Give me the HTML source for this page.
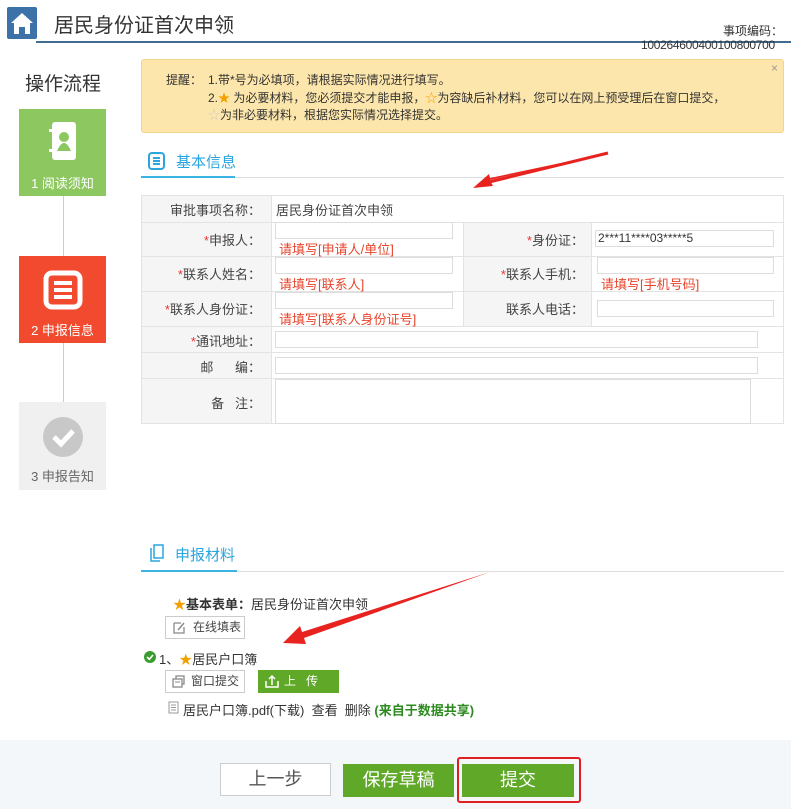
<!DOCTYPE html>
<html><head><meta charset="utf-8"><style>
*{margin:0;padding:0;box-sizing:border-box}
body{width:791px;height:809px;overflow:hidden;background:#fff;font-family:"Liberation Sans","Noto Sans CJK SC",sans-serif;color:#333;font-size:12px;position:relative}
.a{position:absolute}
.lbl{text-align:right;padding-right:8px;background:#f5f5f5;color:#333;font-size:13px}
.r{color:#e33}
.inp{position:absolute;border:1px solid #ddd;background:#fff;height:17px}
.hint{position:absolute;color:#e8452c;font-size:13px}
.btn{position:absolute;border:1px solid #ccc;background:#fff;font-size:12px;color:#444;line-height:21px}
.t{color:#444}
</style></head><body>
<div class="a" style="left:7px;top:7px;width:30px;height:32px;background:#3d72a8;border-radius:2px">
<svg width="30" height="32" viewBox="0 0 30 32"><path d="M15 6 L4 16 H7 V27 H12 V20 H18 V27 H23 V16 H26 Z" fill="#fff"/></svg></div>
<div class="a" style="left:54px;top:9px;font-size:20px;color:#333">居民身份证首次申领</div>
<div class="a" style="left:36px;top:41px;width:755px;height:2px;background:#416d92"></div>
<div class="a" style="right:8px;top:22px;font-size:12px">事项编码：</div>
<div class="a" style="left:641px;top:38px;font-size:12px;letter-spacing:-0.3px">100264600400100800700</div>
<div class="a" style="left:25px;top:69px;font-size:19px;color:#333">操作流程</div>
<div class="a" style="left:19px;top:109px;width:87px;height:87px;background:#8cc760;color:#fff;text-align:center;font-size:13px">
<svg class="a" style="left:29px;top:12px" width="30" height="40" viewBox="0 0 30 40"><rect x="4" y="1" width="24" height="38" rx="3" fill="#fff"/><rect x="1" y="8" width="6" height="3" fill="#fff"/><rect x="1" y="28" width="6" height="3" fill="#fff"/><circle cx="16" cy="16" r="5" fill="#8cc760"/><path d="M9 30 Q16 14 23 30 Z" fill="#8cc760"/></svg>
<div class="a" style="left:0;width:87px;top:64px">1 阅读须知</div></div>
<div class="a" style="left:63px;top:196px;width:1px;height:60px;background:#ccc"></div>
<div class="a" style="left:19px;top:256px;width:87px;height:87px;background:#f24a2f;color:#fff;text-align:center;font-size:13px">
<svg class="a" style="left:24px;top:14px" width="40" height="40" viewBox="0 0 40 40"><rect x="3" y="3" width="34" height="34" rx="6" fill="none" stroke="#fff" stroke-width="5"/><rect x="11" y="11" width="18" height="4" fill="#fff"/><rect x="11" y="18" width="18" height="4" fill="#fff"/><rect x="11" y="25" width="18" height="4" fill="#fff"/></svg>
<div class="a" style="left:0;width:87px;top:64px">2 申报信息</div></div>
<div class="a" style="left:63px;top:343px;width:1px;height:59px;background:#ccc"></div>
<div class="a" style="left:19px;top:402px;width:87px;height:88px;background:#f0f0f0;color:#666;text-align:center;font-size:13px">
<svg class="a" style="left:24px;top:15px" width="40" height="40" viewBox="0 0 40 40"><circle cx="20" cy="20" r="20" fill="#c8c8c8"/><path d="M11 20 L18 27 L30 14" fill="none" stroke="#fff" stroke-width="5"/></svg>
<div class="a" style="left:0;width:87px;top:64px">3 申报告知</div></div>

<div class="a" style="left:141px;top:59px;width:643px;height:74px;background:#fde6ab;border:1px solid #f3d48d;border-radius:3px;font-size:12px;color:#333;line-height:17.5px">
<div class="a" style="right:5px;top:0;color:#999">×</div>
<div class="a" style="left:24px;top:12px">提醒：</div>
<div class="a" style="left:66px;top:12px">1.带*号为必填项，请根据实际情况进行填写。<br>2.<span style="color:#f2a000">★</span> 为必要材料，您必须提交才能申报，<span style="color:#f2a000">☆</span>为容缺后补材料，您可以在网上预受理后在窗口提交，<br><span style="color:#ccc">☆</span>为非必要材料，根据您实际情况选择提交。</div></div>

<svg class="a" style="left:148px;top:152px" width="17" height="18"><rect x="1" y="1" width="15" height="16" rx="3" fill="none" stroke="#2aa6de" stroke-width="2"/><rect x="5" y="5" width="7" height="2" fill="#2aa6de"/><rect x="5" y="8" width="7" height="2" fill="#2aa6de"/><rect x="5" y="11" width="7" height="2" fill="#2aa6de"/></svg>
<div class="a" style="left:176px;top:151px;font-size:15px;color:#2aa6de">基本信息</div>
<div class="a" style="left:141px;top:177px;width:643px;height:1px;background:#ddd"></div>
<div class="a" style="left:141px;top:176px;width:94px;height:2px;background:#3bb3e3"></div>

<div class="a" style="left:141px;top:195px;width:643px;height:229px;border:1px solid #e3e3e3;background:#fff"></div>
<div class="a lbl" style="left:142px;top:196px;width:129px;height:227px"></div>
<div class="a lbl" style="left:463px;top:222px;width:129px;height:104px;border-left:1px solid #e3e3e3;border-right:1px solid #e3e3e3"></div>
<div class="a" style="left:141px;top:222px;width:643px;height:1px;background:#e3e3e3"></div>
<div class="a" style="left:141px;top:256px;width:643px;height:1px;background:#e3e3e3"></div>
<div class="a" style="left:141px;top:291px;width:643px;height:1px;background:#e3e3e3"></div>
<div class="a" style="left:141px;top:326px;width:643px;height:1px;background:#e3e3e3"></div>
<div class="a" style="left:141px;top:352px;width:643px;height:1px;background:#e3e3e3"></div>
<div class="a" style="left:141px;top:378px;width:643px;height:1px;background:#e3e3e3"></div>
<div class="a" style="left:271px;top:195px;width:1px;height:229px;background:#e3e3e3"></div>
<div class="a t" style="right:530px;top:200px;font-size:13px">审批事项名称：</div>
<div class="a t" style="left:276px;top:200px;font-size:13px">居民身份证首次申领</div>
<div class="a t" style="right:530px;top:230px;font-size:13px"><span class="r">*</span>申报人：</div>
<div class="a t" style="right:530px;top:264px;font-size:13px"><span class="r">*</span>联系人姓名：</div>
<div class="a t" style="right:530px;top:299px;font-size:13px"><span class="r">*</span>联系人身份证：</div>
<div class="a t" style="right:530px;top:331px;font-size:13px"><span class="r">*</span>通讯地址：</div>
<div class="a t" style="right:530px;top:357px;font-size:13px">邮&nbsp;&nbsp;&nbsp;&nbsp;&nbsp;&nbsp;编：</div>
<div class="a t" style="right:530px;top:393px;font-size:13px">备&nbsp;&nbsp;&nbsp;注：</div>
<div class="a t" style="right:207px;top:230px;font-size:13px"><span class="r">*</span>身份证：</div>
<div class="a t" style="right:207px;top:264px;font-size:13px"><span class="r">*</span>联系人手机：</div>
<div class="a t" style="right:207px;top:299px;font-size:13px">联系人电话：</div>
<div class="inp" style="left:275px;top:222px;width:178px"></div>
<div class="hint" style="left:279px;top:239px">请填写[申请人/单位]</div>
<div class="inp" style="left:275px;top:257px;width:178px"></div>
<div class="hint" style="left:279px;top:274px">请填写[联系人]</div>
<div class="inp" style="left:275px;top:292px;width:178px"></div>
<div class="hint" style="left:279px;top:309px">请填写[联系人身份证号]</div>
<div class="inp" style="left:595px;top:230px;width:179px;font-size:12px;padding-left:2px;line-height:15px">2***11****03*****5</div>
<div class="inp" style="left:597px;top:257px;width:177px"></div>
<div class="hint" style="left:601px;top:274px">请填写[手机号码]</div>
<div class="inp" style="left:597px;top:300px;width:177px"></div>
<div class="inp" style="left:275px;top:331px;width:483px"></div>
<div class="inp" style="left:275px;top:357px;width:483px"></div>
<div class="inp" style="left:275px;top:379px;width:476px;height:45px"></div>

<svg class="a" style="left:150px;top:544px" width="14" height="18"><path d="M4 1 H13 V14 H4 Z M1 4 V17 H10" fill="none" stroke="#2aa6de" stroke-width="1.5"/></svg>
<div class="a" style="left:175px;top:544px;font-size:15px;color:#2aa6de">申报材料</div>
<div class="a" style="left:141px;top:571px;width:643px;height:1px;background:#ddd"></div>
<div class="a" style="left:141px;top:570px;width:96px;height:2px;background:#3bb3e3"></div>

<div class="a" style="left:173px;top:594px;font-size:13px"><span style="color:#f2a000">★</span><b>基本表单：</b>居民身份证首次申领</div>
<div class="btn" style="left:165px;top:616px;width:80px;height:23px;padding-left:27px">在线填表</div>
<svg class="a" style="left:173px;top:621px" width="13" height="13"><path d="M1 2 H8 M1 2 V12 H11 V6" fill="none" stroke="#888" stroke-width="1.3"/><path d="M5 9 L11 2" stroke="#888" stroke-width="1.5"/></svg>
<svg class="a" style="left:144px;top:651px" width="12" height="12"><circle cx="6" cy="6" r="6" fill="#3a9b2e"/><path d="M3 6 L5.3 8.3 L9 4" fill="none" stroke="#fff" stroke-width="1.6"/></svg>
<div class="a" style="left:159px;top:649px;font-size:13px">1、<span style="color:#f2a000">★</span>居民户口簿</div>
<div class="btn" style="left:165px;top:670px;width:80px;height:23px;padding-left:25px">窗口提交</div>
<svg class="a" style="left:172px;top:675px" width="13" height="13"><rect x="1" y="4" width="9" height="8" fill="none" stroke="#888" stroke-width="1.3"/><path d="M4 4 V1 H12 V9 H10" fill="none" stroke="#888" stroke-width="1.3"/><path d="M3 7 H8" stroke="#888"/></svg>
<div class="a" style="left:258px;top:670px;width:81px;height:23px;background:#5fa828;color:#fff;font-size:12px;line-height:23px;padding-left:26px">上&nbsp;&nbsp;&nbsp;传</div>
<svg class="a" style="left:265px;top:675px" width="14" height="13"><path d="M1 6 V12 H13 V6" fill="none" stroke="#fff" stroke-width="1.5"/><path d="M7 10 V1 M4 4 L7 1 L10 4" fill="none" stroke="#fff" stroke-width="1.5"/></svg>
<svg class="a" style="left:168px;top:701px" width="11" height="13"><rect x="1" y="1" width="9" height="11" fill="none" stroke="#999"/><path d="M3 4 H8 M3 6.5 H8 M3 9 H8" stroke="#999"/></svg>
<div class="a" style="left:183px;top:700px;font-size:13px">居民户口簿.pdf(下载)&nbsp; 查看&nbsp; 删除 <b style="color:#2c8a1f">(来自于数据共享)</b></div>

<div class="a" style="left:0;top:740px;width:791px;height:69px;background:#f3f7fa"></div>
<div class="a" style="left:220px;top:763px;width:111px;height:33px;border:1px solid #ccc;background:#fff;font-size:18px;color:#555;text-align:center;line-height:31px">上一步</div>
<div class="a" style="left:343px;top:764px;width:111px;height:33px;background:#5fa828;font-size:18px;color:#fff;text-align:center;line-height:33px">保存草稿</div>
<div class="a" style="left:457px;top:757px;width:124px;height:46px;border:2px solid #e02020;border-radius:3px"></div>
<div class="a" style="left:462px;top:764px;width:112px;height:33px;background:#5fa828;font-size:18px;color:#fff;text-align:center;line-height:33px">提交</div>

<svg class="a" style="left:0;top:0" width="791" height="809">
<path d="M608 153 L490 180 L493 186 L473 188 L489 174 L490 178 Z" fill="#e8231f"/>
<line x1="608" y1="153" x2="485" y2="183" stroke="#e8231f" stroke-width="3"/>
<path d="M283 643 L300 626 L302 632 L490 572 L304 638 L306 644 Z" fill="#e8231f"/>
</svg>
</body></html>
